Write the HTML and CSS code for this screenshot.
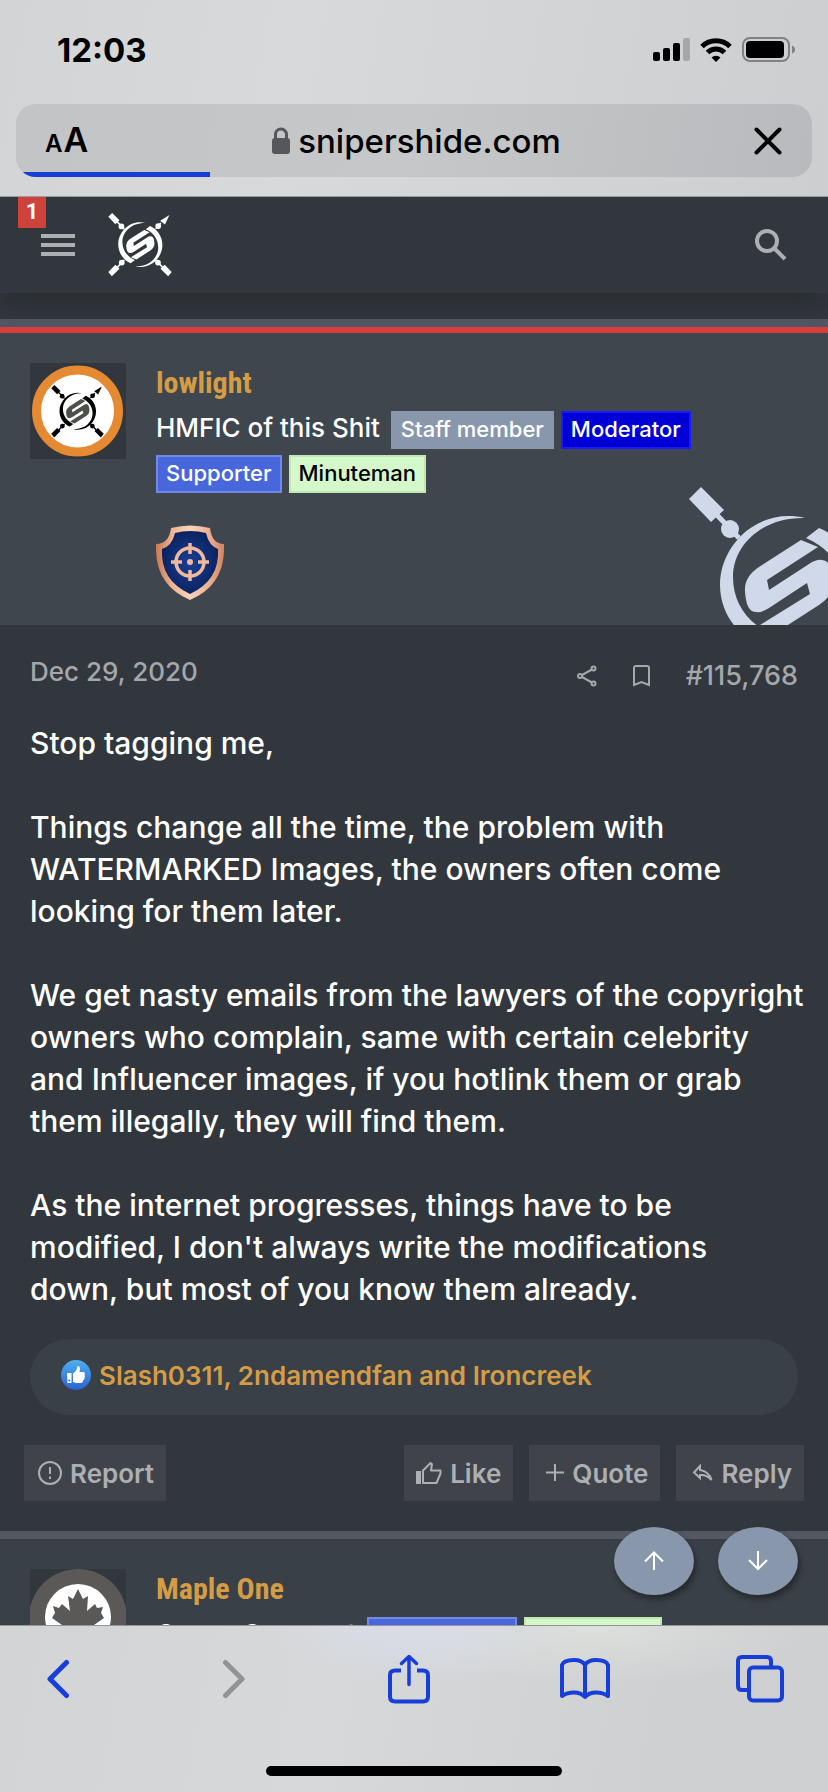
FILE: index.html
```html
<!DOCTYPE html>
<html lang="en">
<head>
<meta charset="utf-8">
<meta name="viewport" content="width=device-width, initial-scale=1">
<title>snipershide.com</title>
<link rel="stylesheet" href="styles.css">
</head>
<body>
<svg class="defs" width="0" height="0" aria-hidden="true">
  <defs>
    <g id="rods">
      <path d="M13 0L36 23L23 35L1 12Z"/>
      <path d="M28 27L51 51M29 170L51 147M171 170L149 147M165 31L149 49" fill="none" stroke="currentColor" stroke-width="5"/>
      <circle cx="42" cy="42" r="9"/><circle cx="43" cy="155" r="9"/><circle cx="156" cy="155" r="9"/><circle cx="157" cy="41" r="9"/>
      <path d="M1 184L23 162L36 174L12 198Z"/>
      <path d="M199 184L177 162L164 174L188 198Z"/>
      <path d="M192 6L163 24L178 36Z"/>
      <path id="arc" d="M117 31C70 20 32 58 32 98C32 126 50 149 71 157L84 147C60 137 45 116 45 90C45 58 74 30 117 31Z"/>
      <use href="#arc" transform="rotate(180 101 99)"/>
    </g>
    <path id="ess" d="M113 53L71 80Q56 90 57 104Q58 125 68 125Q73 126 81 121L119 96L122 107L72 138L89 145L131 118Q146 108 145 94Q144 73 134 73Q129 72 121 77L81 103L79 93L130 60Z"/>
    <linearGradient id="copper" x1="0" y1="0" x2="1" y2="0">
      <stop offset="0" stop-color="#c97850"/><stop offset=".25" stop-color="#efb596"/><stop offset=".5" stop-color="#f8d4ba"/><stop offset=".75" stop-color="#efb596"/><stop offset="1" stop-color="#cf835f"/>
    </linearGradient>
    <radialGradient id="navy"><stop offset="0" stop-color="#1a3f98"/><stop offset="1" stop-color="#0b2360"/></radialGradient>
    <linearGradient id="sky" x1="0" y1="0" x2="0" y2="1"><stop offset="0" stop-color="#4fb0ee"/><stop offset="1" stop-color="#2a62cf"/></linearGradient>
  </defs>
</svg>

<div class="chrome-top">
  <div class="status">
    <span class="time">12:03</span>
    <span class="status-icons">
      <svg width="37" height="24" viewBox="0 0 37 24"><rect y="14" width="7" height="9" rx="2"/><rect x="10" y="10" width="7" height="13" rx="2"/><rect x="20" y="5" width="7" height="18" rx="2"/><rect x="30" width="7" height="23" rx="2" fill="#a6a7a9"/></svg>
      <svg width="32" height="24" viewBox="0 0 32 24" fill="none" stroke="#000" stroke-width="5"><path d="M2 8.500a20 20 0 0 1 28 0"/><path d="M7.500 14.500a12 12 0 0 1 17 0"/><path d="M16 24L11.500 19.500a6.500 6.500 0 0 1 9 0Z" fill="#000" stroke="none"/></svg>
      <svg width="54" height="26" viewBox="0 0 54 26"><rect x="1" y="1" width="46" height="23" rx="7" fill="none" stroke="#7f8183" stroke-width="2"/><rect x="4" y="4" width="38" height="17" rx="4"/><path d="M50 8.500q3 1 3 4t-3 4Z" fill="#7f8183"/></svg>
    </span>
  </div>
  <div class="address">
    <button class="aa" aria-label="Text size"><span class="aa-small">A</span><span class="aa-big">A</span></button>
    <button class="site">
      <svg width="18" height="27" viewBox="0 0 18 27"><path d="M3.500 12V7.500a5.500 5.500 0 0 1 11 0V12" fill="none" stroke="#56575d" stroke-width="3"/><rect y="11" width="18" height="16" rx="3" fill="#56575d"/></svg>
      <span>snipershide.com</span>
    </button>
    <button class="stop" aria-label="Stop loading"><svg width="28" height="28" viewBox="0 0 28 28" fill="none" stroke="#000" stroke-width="4" stroke-linecap="round"><path d="M2.500 2.500L25.500 25.500M25.500 2.500L2.500 25.500"/></svg></button>
    <div class="progress"></div>
  </div>
</div>

<div class="viewport">
  <header class="site-header">
    <button class="menu" aria-label="Menu"><svg width="34" height="24" viewBox="0 0 34 24" fill="#acafb3"><rect y="0" width="34" height="4"/><rect y="9" width="34" height="4"/><rect y="18" width="34" height="4"/></svg><span class="count">1</span></button>
    <a class="logo" href="#" aria-label="Home"><svg width="64" height="64" viewBox="0 0 200 200"><use href="#rods"/><use href="#ess"/></svg></a>
    <button class="search" aria-label="Search"><svg width="34" height="34" viewBox="0 0 34 34" fill="none" stroke="#acafb3" stroke-width="4"><circle cx="13" cy="13" r="10"/><path d="M20.500 20.500L31 31"/></svg></button>
  </header>

  <main class="posts">
    <article class="post first">
      <div class="user staff">
        <svg class="avatar" viewBox="0 0 96 96"><rect width="96" height="96" fill="#32363d"/><circle cx="47.500" cy="48" r="41" fill="#fff" stroke="#e58932" stroke-width="9"/><g transform="translate(21 22) scale(.265)"><g class="ink"><use href="#rods"/></g><use href="#ess" fill="#4b5146"/></g></svg>
        <div class="who">
          <a class="name" href="#">lowlight</a>
          <div class="tags"><span class="title">HMFIC of this Shit</span><span class="tag t-staff">Staff member</span><span class="tag t-mod">Moderator</span><span class="tag t-sup">Supporter</span><span class="tag t-min">Minuteman</span></div>
          <svg class="shield" viewBox="0 0 68 75">
            <path d="M15 3Q34 -2 54 3Q56 19 68 19Q70 60 34 75Q-2 60 0 19Q13 19 15 3Z" fill="url(#copper)"/>
            <path d="M19 8Q34 4 50 8Q53 21 62 24Q64 55 34 69Q4 55 6 24Q16 21 19 8Z" fill="url(#navy)"/>
            <g fill="none" stroke="#f0b99d" stroke-width="3.500"><circle cx="34" cy="37" r="14"/><path d="M34 18v11M34 45v11M15 37h11M42 37h11"/></g><circle cx="34" cy="37" r="3" fill="#f0b99d"/>
          </svg>
        </div>
        <svg class="watermark" viewBox="0 0 200 200"><use href="#rods"/><use href="#ess"/></svg>
      </div>
      <div class="meta">
        <a class="date" href="#">Dec 29, 2020</a>
        <div class="meta-right">
          <a href="#" aria-label="Share"><svg width="20" height="22" viewBox="0 0 20 22" fill="none" stroke="#a4a7ab" stroke-width="2"><circle cx="3" cy="11" r="2"/><circle cx="16.500" cy="3.500" r="2"/><circle cx="16.500" cy="18.500" r="2"/><path d="M5 10L15 4.500M5 12L15 17.500"/></svg></a>
          <a href="#" aria-label="Bookmark"><svg width="17" height="22" viewBox="0 0 17 22" fill="none" stroke="#a4a7ab" stroke-width="2"><path d="M1 20V3Q1 1 3 1H14Q16 1 16 3V20L8.500 17Z"/></svg></a>
          <a href="#">#115,768</a>
        </div>
      </div>
      <div class="body">
        <p>Stop tagging me,</p>
        <p>Things change all the time, the problem with<br>WATERMARKED Images, the owners often come<br>looking for them later.</p>
        <p>We get nasty emails from the lawyers of the copyright<br>owners who complain, same with certain celebrity<br>and Influencer images, if you hotlink them or grab<br>them illegally, they will find them.</p>
        <p>As the internet progresses, things have to be<br>modified, I don't always write the modifications<br>down, but most of you know them already.</p>
      </div>
      <div class="reactions">
        <svg width="30" height="30" viewBox="0 0 30 30"><circle cx="15" cy="15" r="15" fill="url(#sky)"/><path d="M6 13h4.500v10H6.500ZM12 13.500L15.500 10L16.500 6Q19 5.500 19 8.500L18.500 12H22.500Q24.500 12.500 23.500 15Q24.500 16.500 23.500 18Q23.500 20 22 20.500Q22 23 19.500 23H15L12 22Z" fill="#fff"/><circle cx="8.300" cy="20.500" r="1" fill="#2f6fd5"/></svg>
        <a href="#">Slash0311, 2ndamendfan and Ironcreek</a>
      </div>
      <div class="actions">
        <button class="report"><svg width="24" height="24" viewBox="0 0 24 24" fill="none" stroke="currentColor" stroke-width="2"><circle cx="12" cy="12" r="11"/><path d="M12 6v7M12 15.500v2.500"/></svg>Report</button>
        <button><svg width="26" height="24" viewBox="0 0 26 24" fill="none" stroke="currentColor" stroke-width="2"><path d="M0 10h5v13H0Z" fill="currentColor" stroke="none"/><path d="M7 22V9.500L14.500 2L16 3L15 9.500H24.500V12.500L20.500 22Z" stroke-linejoin="round"/></svg>Like</button>
        <button class="quote"><svg width="18" height="20" viewBox="0 0 18 20" fill="none" stroke="currentColor" stroke-width="2"><path d="M9 1v17M0 9.500h18"/></svg>Quote</button>
        <button class="reply"><svg width="21" height="18" viewBox="0 0 21 18" fill="none" stroke="currentColor" stroke-width="2"><path d="M8 2L2 8.500L8 14V11Q15 10.500 19.500 16Q17 7.500 8 6Z"/></svg>Reply</button>
      </div>
    </article>
    <article class="post">
      <div class="user">
        <svg class="avatar" viewBox="0 0 96 96"><rect width="96" height="96" fill="#32363d"/><circle cx="48" cy="49" r="49" fill="#5a5957"/><circle cx="48" cy="48" r="33" fill="#fff"/><path d="M48 20L53 30L58 27L57 42L65 35L67 39L73 38L71 44L74 49L64 56L65 60L50 58V72H46V58L31 60L32 56L22 49L25 44L23 37L29 39L32 35L40 42L38 27L43 30Z" fill="#5a5957"/></svg>
        <div class="who">
          <a class="name" href="#">Maple One</a>
          <div class="tags"><span class="title">Gunny Sergeant</span><span class="tag t-sup">Full Member</span><span class="tag t-min">Minuteman</span></div>
        </div>
      </div>
    </article>
  </main>

  <div class="jump">
    <button aria-label="Top"><svg width="20" height="20" viewBox="0 0 20 20" fill="none" stroke="#fff" stroke-width="2"><path d="M10 19V2M1 10.500L10 1.500L19 10.500"/></svg></button>
    <button aria-label="Bottom"><svg width="20" height="20" viewBox="0 0 20 20" fill="none" stroke="#fff" stroke-width="2"><path d="M10 0V17M1 9L10 18L19 9"/></svg></button>
  </div>
</div>

<nav class="toolbar">
  <div class="tools">
    <button aria-label="Back"><svg width="24" height="40" viewBox="0 0 24 40" stroke-width="5"><path d="M20.500 3.500L4 20L20.500 36.500"/></svg></button>
    <button class="off" aria-label="Forward"><svg width="24" height="40" viewBox="0 0 24 40" stroke-width="5"><path d="M3.500 3.500L20 20L3.500 36.500"/></svg></button>
    <button aria-label="Share"><svg width="42" height="50" viewBox="0 0 42 50" stroke-width="4"><path d="M13 16.500H7Q2 16.500 2 21V42.500Q2 47.500 7 47.500H35Q40 47.500 40 42.500V21Q40 16.500 35 16.500H29" stroke-linecap="butt"/><path d="M21 30.500V2.500M13.500 9.500L21 2.500L28.500 9.500" stroke-width="3.500"/></svg></button>
    <button aria-label="Bookmarks"><svg width="50" height="42" viewBox="0 0 50 42" stroke-width="4"><path d="M25 7Q22 2 14 2Q4 2 2 7V38Q7 34.500 14 34.500Q21 34.500 25 39Q29 34.500 36 34.500Q43 34.500 48 38V7Q46 2 36 2Q28 2 25 7ZM25 7V38"/></svg></button>
    <button aria-label="Tabs"><svg width="48" height="48" viewBox="0 0 48 48" stroke-width="4"><rect x="13" y="12.500" width="33" height="33" rx="4"/><path d="M35 12V6Q35 2 31 2H6Q2 2 2 6V31Q2 35 6 35H12"/></svg></button>
  </div>
  <div class="home"></div>
</nav>
</body>
</html>
```
FILE: styles.css
```css
* { box-sizing: border-box; }
html, body { height: 100%; }
body {
  margin: 0;
  display: flex;
  flex-direction: column;
  overflow: hidden;
  background: #32363d;
  color: #fff;
  font-family: Inter, "Liberation Sans", sans-serif;
  font-weight: 500;
}
button { margin: 0; padding: 0; border: 0; background: none; color: inherit; font: inherit; }
a { color: inherit; text-decoration: none; }
svg { display: block; flex: none; }
.defs { position: absolute; }
p { margin: 0; }

/* Browser chrome */
.chrome-top {
  flex: none;
  padding: 0 16px 19px;
  border-bottom: 1px solid #999b9e;
  background: linear-gradient(100deg, #d3d4d6 0%, #d8d9da 35%, #d4d5d7 60%, #cdced0 100%);
  color: #000;
}
.status {
  display: flex;
  justify-content: space-between;
  height: 104px;
  padding: 30px 16px 0 41px;
}
.time { font-size: 33px; font-weight: 700; line-height: 40px; }
.status-icons { display: flex; gap: 10px; height: 40px; align-items: center; }
.address {
  position: relative;
  display: grid;
  grid-template-columns: 1fr auto 1fr;
  align-items: center;
  height: 73px;
  padding: 0 30px 0 29px;
  border-radius: 20px;
  overflow: hidden;
  background: linear-gradient(100deg, #c3c4c6, #c6c7c9 50%, #b9babd);
}
.aa { display: flex; align-items: baseline; justify-self: start; gap: 1px; padding-top: 3px; font-weight: 600; line-height: 40px; }
.aa-small { font-size: 24px; }
.aa-big { font-size: 34px; }
.site { display: flex; align-items: center; gap: 8px; padding-left: 6px; font-size: 33px; line-height: 40px; }
.stop { justify-self: end; }
.progress { position: absolute; left: 0; bottom: 0; width: 194px; height: 5px; background: #173fd8; }

/* Page */
.viewport { position: relative; flex: 1; min-height: 0; overflow: hidden; }
.site-header {
  position: relative;
  display: flex;
  align-items: center;
  height: 96px;
  padding: 0 40px 0 41px;
  background: #32363d;
  box-shadow: 0 14px 24px -4px #292b30;
}
.menu { padding-top: 2px; }
.count {
  position: absolute;
  left: 18px;
  top: 0;
  width: 28px;
  height: 31px;
  background: #cf413b;
  color: #fff;
  font: 700 22px/29px Roboto, sans-serif;
  text-align: center;
}
.logo { margin-left: 33px; color: #fff; fill: #fff; }
.search { margin-left: auto; }

.post { border-top: 8px solid #535863; }
.first { margin-top: 26px; padding-bottom: 30px; }
.user {
  position: relative;
  display: flex;
  gap: 30px;
  padding: 30px 30px 25px;
  background: #394047;
  overflow: hidden;
}
.staff { background: #40464d; border-top: 6px solid #d93d3d; }
.avatar { width: 96px; height: 96px; }
.ink { color: #000; fill: #000; }
.who { flex: 1; min-width: 0; }
.name {
  display: block;
  color: #d49d45;
  font-family: "Roboto Condensed", "Liberation Sans Narrow", Roboto, sans-serif;
  font-size: 30px;
  font-weight: 700;
  line-height: 40px;
}
.tags { display: flex; flex-wrap: wrap; gap: 6px 7px; margin-top: 8px; }
.title { padding-right: 4px; font-size: 26px; line-height: 34px; }
.tag {
  height: 38px;
  padding: 0 8px;
  border: 2px solid;
  font-size: 22px;
  line-height: 33px;
}
.t-staff { background: #8997ad; border-color: #8997ad; }
.t-mod { background: #0000d6; border-color: #1a1aff; }
.t-sup { background: #4967dc; border-color: #718ae5; }
.t-min { background: #d5f8ca; border-color: #c0e8b3; color: #000; }
.shield { width: 68px; height: 75px; margin-top: 32px; }
.watermark {
  position: absolute;
  right: -60px;
  bottom: -62px;
  width: 200px;
  height: 200px;
  color: #d0d9e9;
  fill: #d0d9e9;
}
.meta {
  display: flex;
  justify-content: space-between;
  align-items: flex-start;
  padding: 30px 30px 0;
  color: #a4a7ab;
  font-size: 26px;
  line-height: 34px;
}
.meta-right { display: flex; align-items: center; gap: 36px; padding-top: 4px; font-size: 27px; }
.body {
  display: grid;
  gap: 42px;
  padding: 29px 16px 0 30px;
  font-size: 30px;
  line-height: 42px;
}
.reactions {
  display: flex;
  align-items: center;
  gap: 8px;
  height: 76px;
  margin: 29px 30px 0;
  padding: 0 31px 4px;
  border-radius: 38px;
  background: #394047;
  color: #d49d45;
  font-size: 26px;
  font-weight: 600;
}
.actions { display: flex; gap: 16px; margin: 30px 24px 0; color: #acafb3; font-size: 26px; font-weight: 600; }
.actions button {
  display: flex;
  align-items: center;
  gap: 8px;
  height: 56px;
  padding: 0 12px;
  background: #40444a;
}
.actions .report { margin-right: auto; padding-left: 14px; }
.actions .quote { padding-left: 17px; }
.actions .reply { padding-left: 16px; }
.jump { position: absolute; right: 30px; bottom: 30px; display: flex; gap: 24px; }
.jump button {
  display: flex;
  align-items: center;
  justify-content: center;
  width: 80px;
  height: 68px;
  border-radius: 50%;
  background: #8997ad;
  box-shadow: 2px 4px 6px rgba(0, 0, 0, .4);
}

/* Bottom toolbar */
.toolbar {
  flex: none;
  padding: 28px 0 16px;
  border-top: 1px solid #939598;
  background:
    radial-gradient(ellipse at 50% 0, rgba(218, 222, 236, .8), transparent 25%),
    radial-gradient(ellipse at 72% 0, rgba(223, 227, 222, .8), transparent 25%),
    linear-gradient(100deg, #d3d4d5, #d6d8d9 40%, #cfd0d2 80%);
}
.tools { display: flex; align-items: center; justify-content: space-between; height: 50px; padding: 0 43px 0 33px; }
.tools button { display: flex; justify-content: center; width: 50px; }
.tools svg { fill: none; stroke: #173fd8; stroke-linecap: round; stroke-linejoin: round; }
.tools .off svg { stroke: #929394; }
.home { width: 296px; height: 10px; margin: 62px auto 0; border-radius: 5px; background: #000; }
```
